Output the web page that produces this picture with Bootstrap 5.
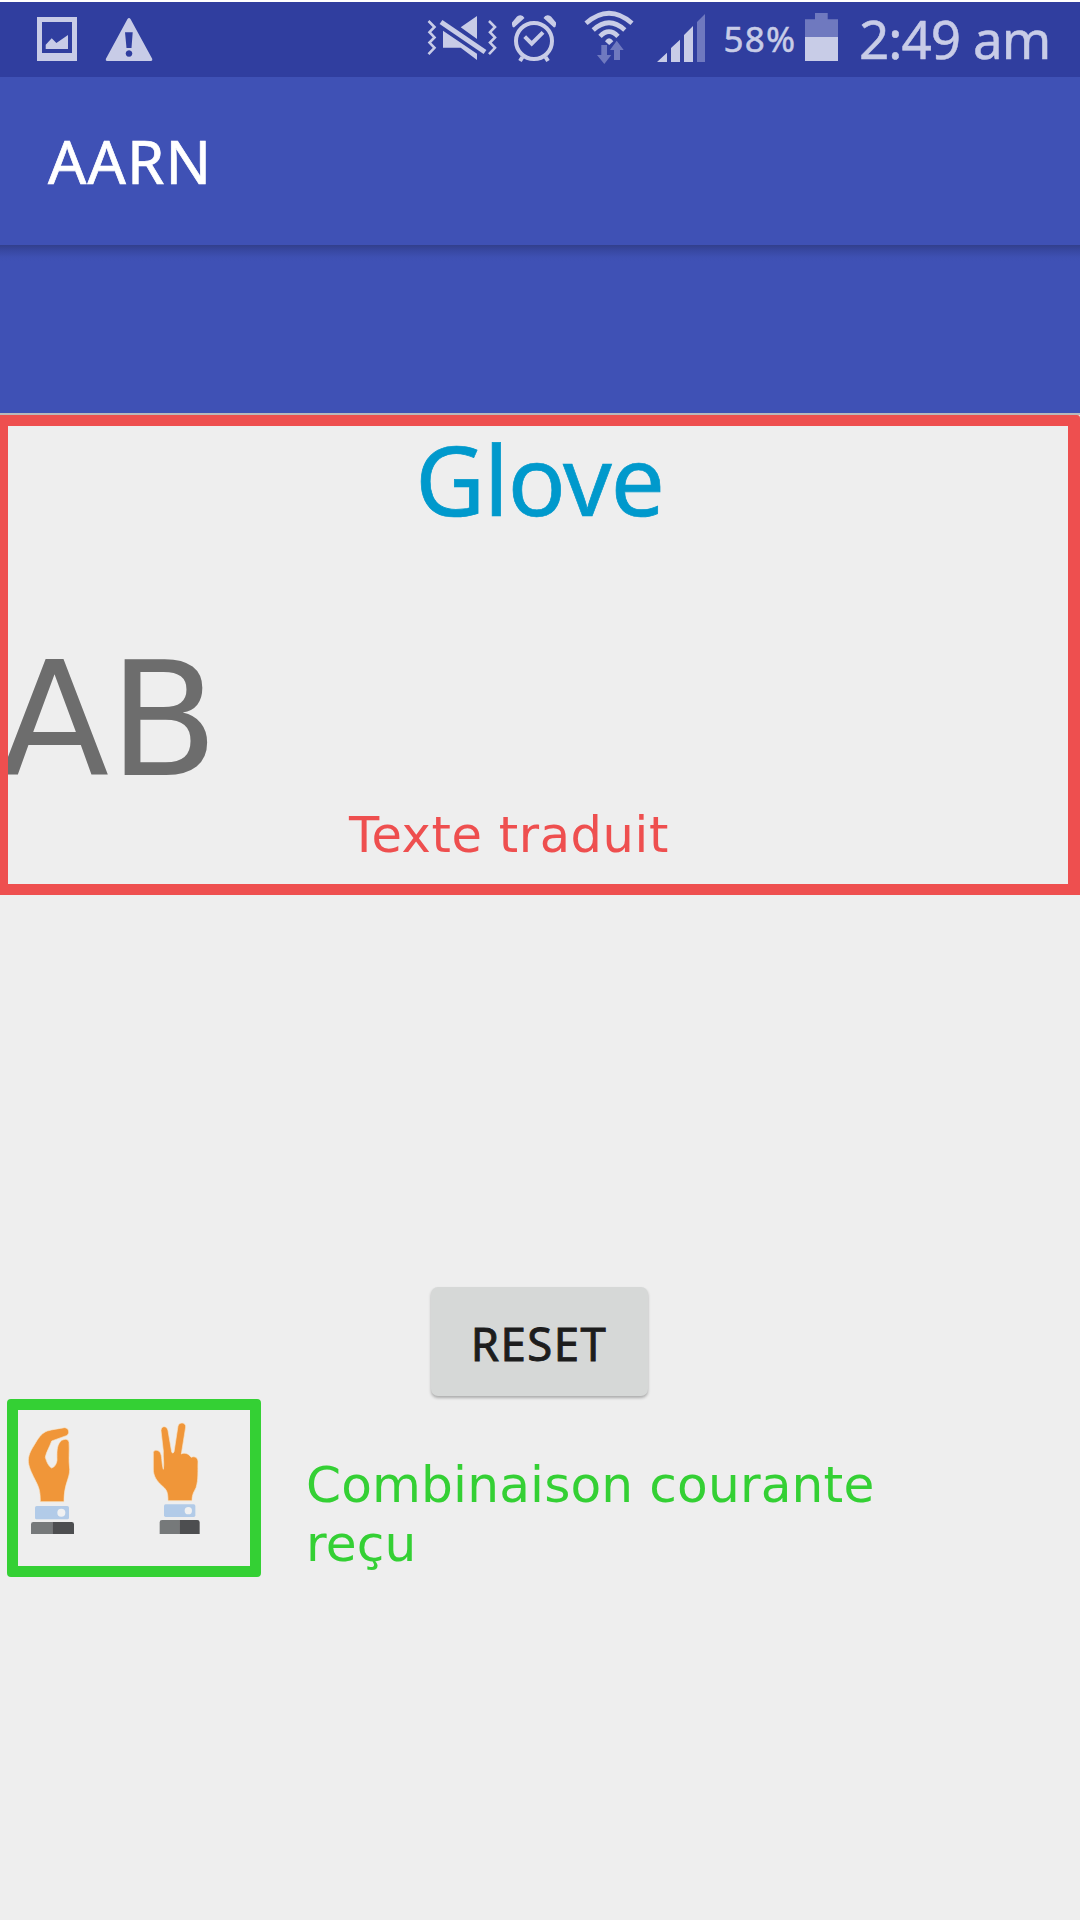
<!DOCTYPE html>
<html lang="fr">
<head>
<meta charset="utf-8">
<meta name="viewport" content="width=device-width, initial-scale=1">
<title>AARN</title>
<link rel="stylesheet" href="https://cdn.jsdelivr.net/npm/bootstrap@5.3.0/dist/css/bootstrap.min.css">
<style>
  body { background: #eee; font-family: "Noto Sans", sans-serif; }
  .screen { width: 1080px; height: 1920px; background: #eee; white-space: nowrap; }
  .status-bar { height: 77px; background: #303e9f; border-top: 2px solid #fff; color: #c8cce7; padding-left: 37px; line-height: 73px; }
  .status-bar svg { height: 75px; flex: none; fill: currentColor; }
  .status-bar .dim { fill: #6f79bf; }
  .battery-level { font-size: 35px; letter-spacing: 1.2px; margin-left: 18.5px; width: 81.5px; -webkit-text-stroke: .5px; }
  .clock { font-size: 53px; letter-spacing: -1px; margin-left: 21px; -webkit-text-stroke: .5px; }
  .app-bar { height: 168px; background: #3f51b5; padding: 0 48px; line-height: 168px; font-size: 60px; letter-spacing: 1.2px; -webkit-text-stroke: .7px; }
  .sub-bar { height: 168px; background: linear-gradient(#323f8c, #3747a0 5px, #3e50b2 12px, #3f51b5 16px); }
  .bar-edge { height: 2px; background: #b9b9bb; }
  .translated { height: 480px; border: 11px solid #ee4f4f; border-left-width: 8px; border-right-width: 12px; border-top-right-radius: 3px; }
  .device-name { font-size: 96px; line-height: 105px; letter-spacing: -1px; padding-left: 3px; color: #0099cc; -webkit-text-stroke: .7px; }
  .letters { font: 159.5px/190px "DejaVu Sans", sans-serif; color: #6d6d6d; margin-top: 94px; text-indent: -8px; }
  .caption-red { font: 49.5px/60px "DejaVu Sans", sans-serif; letter-spacing: .58px; color: #ee4f4f; margin: -10px 0 0 341px; }
  .btn-reset { --bs-btn-bg: #d6d8d7; --bs-btn-color: #1d1d1d; --bs-btn-hover-bg: #cbcdcc; --bs-btn-border-width: 0; --bs-btn-border-radius: 7px;
    width: 217px; height: 109px; margin: 392px 0 0 -2px; font-size: 45.5px; letter-spacing: 1.5px; line-height: 112px; box-shadow: 0 2px 3px rgba(0,0,0,.28); -webkit-text-stroke: .9px; }
  .gestures { width: 254px; height: 178px; border: 11px solid #34d034; border-radius: 4px; }
  .gestures svg { width: 232px; height: 156px; }
  .caption-green { font: 50.2px/59px "DejaVu Sans", sans-serif; letter-spacing: .15px; color: #34d034; margin-left: 45px; padding-top: 56px; width: 600px; white-space: normal; }
</style>
</head>
<body>
<div class="screen d-flex flex-column overflow-hidden">
  <header>
    <div class="status-bar d-flex">
      <!-- screenshot saved -->
      <svg width="40" viewBox="37 2 40 75"><path fill-rule="evenodd" d="M37 17h40v44H37zM42 22v31h30V22z"/><path d="M45.700 49v-4.300l6-6.400 4.700 4.700L68 35v14z"/></svg>
      <!-- warning -->
      <svg width="48" viewBox="105 2 48 75" style="margin-left:28px"><path fill-rule="evenodd" d="M127.500 19Q129 17 130.500 19L152.300 59Q152.600 61 151 61H107Q105.400 61 105.800 59zM125 32.300l1.500 15.700h5l1.200-15.700zM129 50.200a3.300 3.300 0 1 0 .01 0z"/></svg>
      <!-- vibrate, sound off -->
      <svg width="70" viewBox="427 2 70 75" style="margin-left:274px">
        <path fill="none" stroke="currentColor" stroke-width="2.600" d="M428.500 21l6 6-5 5.200 5 5.200-5 5.200 5 5.200-6 6.400M489 21l6 6-5 5.200 5 5.200-5 5.200 5 5.200-6 6.400"/>
        <path d="M443 30.700l34 23V60l-16.300-12.300H443zM460.700 27.300L477 16v23z"/>
        <path stroke="currentColor" stroke-width="5" d="M441 22l44 30"/>
      </svg>
      <!-- alarm -->
      <svg width="46" viewBox="511 2 46 75" style="margin-left:14px">
        <g fill="none" stroke="currentColor" stroke-width="4"><circle cx="534" cy="41" r="18"/><path d="M524.700 36.700l7 7 11.300-11.400M522.500 57l-2.500 4M545.500 57l2.500 4"/></g>
        <path d="M514 27.500q-2-.5-2-3V22.500l5-6q5-3 7.500 1.500zM554 27.500q2-.5 2-3V22.500l-5-6q-5-3-7.500 1.500z"/>
      </svg>
      <!-- wifi -->
      <svg width="52" viewBox="583 2 52 75" style="margin-left:26px">
        <path fill="none" stroke="currentColor" stroke-width="4.700" d="M586 23.200Q609 3.200 632 23.200M593.200 30Q609 15.500 624.800 30M600 36.400Q609 27 618 36.400"/>
        <path d="M605 41.200Q609 35.500 613.300 41.200L609.200 44.900z"/>
        <path class="dim" d="M601.300 45h5.700v10h4.300l-7 9-7.300-9h4.300zM616.700 40.700l7 9.300H620v10h-6V50h-4z"/>
      </svg>
      <!-- mobile signal -->
      <svg width="48" viewBox="657 2 48 75" style="margin-left:22px"><path d="M657 62l10-9.300V62zM671 62V48l9-8.300V62zM684 62V35l9-9v36z"/><path class="dim" d="M697 62V22l8-8v48z"/></svg>
      <span class="battery-level">58%</span>
      <svg width="33" viewBox="805 2 33 75"><path class="dim" d="M805 19.300h10V13h12.700v6.300H838V37h-33z"/><path d="M805 37h33v24h-33z"/></svg>
      <span class="clock">2:49 am</span>
    </div>
    <div class="app-bar text-white">AARN</div>
    <div class="sub-bar"></div>
    <div class="bar-edge"></div>
  </header>

  <section class="translated">
    <div class="device-name text-center">Glove</div>
    <div class="letters overflow-hidden">AB</div>
    <div class="caption-red">Texte traduit</div>
  </section>

  <button type="button" class="btn btn-reset align-self-center p-0">RESET</button>

  <section class="d-flex" style="margin:3px 0 0 7px">
    <div class="gestures">
      <svg class="d-block" viewBox="54 60 696 468">
        <g fill="#f09639" stroke="#f7e6cb" stroke-width="2">
          <path d="M121 335C121 300 116 290 104 267C94 246 85 230 85 210C86 190 96 176 107 158C118 139 128 128 142 123C158 118 178 116 193 113C208 113 210 132 199 137L155 153C149 170 138 188 136 202C140 217 147 230 155 234C164 232 170 221 171 211C171 188 169 169 181 155C188 147 205 144 207 157C209 184 205 207 209 238C209 268 192 280 192 335Z"/>
          <path d="M504 332C504 306 500 300 488 289C469 272 460 258 460 237V187C463 178 475 180 480 187C487 197 484 218 490 238C493 220 489 205 490 183L483 122C483 105 502 107 504 122L515 186Q518 193 522 186L534 108C538 94 558 97 557 111L544 192C552 187 566 190 573 202C585 197 594 204 594 215C593 242 596 268 588 293C581 307 576 314 576 332Z"/>
        </g>
        <g fill="#b2cbe8"><rect x="105" y="348" width="102" height="40" rx="5"/><rect x="492" y="343" width="94" height="38" rx="5"/></g>
        <g fill="#f0f1f2"><circle cx="184" cy="368" r="12"/><circle cx="565" cy="362" r="11"/></g>
        <path fill="#76797a" d="M93 432V403q0-7 7-7h57v36zM479 432V397q0-7 7-7h52v42z"/>
        <path fill="#4d4e50" d="M157 396h58q7 0 7 7v29h-65zM538 390h54q7 0 7 7v35h-61z"/>
      </svg>
    </div>
    <div class="caption-green">Combinaison courante reçu</div>
  </section>
</div>
<script src="https://cdn.jsdelivr.net/npm/bootstrap@5.3.0/dist/js/bootstrap.bundle.min.js"></script>
</body>
</html>
